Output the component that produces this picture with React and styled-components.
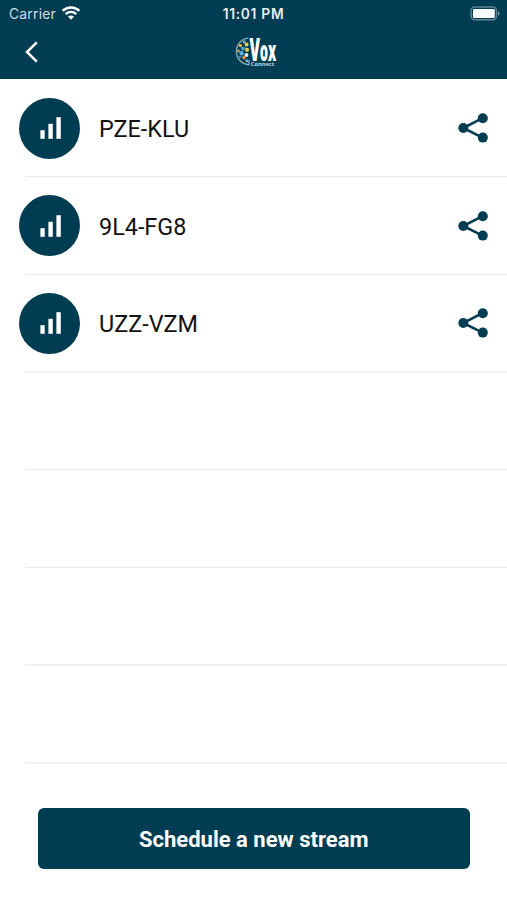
import React from 'react';
import styled, { createGlobalStyle } from 'styled-components';

const streams = ['PZE-KLU', '9L4-FG8', 'UZZ-VZM'];
const emptyRows = [0, 1, 2, 3];

const App = () => {
    return (
        <Screen>
            <GlobalStyle />
            <Header>
                <StatusBar>
                    <Carrier>
                        <CarrierName>Carrier</CarrierName>
                        <WifiIcon />
                    </Carrier>
                    <Time>11:01 PM</Time>
                    <Battery>
                        <BatteryIcon />
                    </Battery>
                </StatusBar>
                <NavBar>
                    <BackButton aria-label="Back">
                        <BackIcon />
                    </BackButton>
                    <Logo />
                </NavBar>
            </Header>
            <List>
                {streams.map((name) => (
                    <Row key={name}>
                        <Avatar>
                            <BarsIcon />
                        </Avatar>
                        <Name>{name}</Name>
                        <ShareButton aria-label="Share">
                            <ShareIcon />
                        </ShareButton>
                    </Row>
                ))}
                {emptyRows.map((row) => <Row key={row} />)}
            </List>
            <Footer>
                <ScheduleButton>Schedule a new stream</ScheduleButton>
            </Footer>
        </Screen>
    )
}

export default App

const WifiIcon = () => (
    <svg width="20" height="15" viewBox="0 0 20 15" fill="none" stroke="#fff">
        <path d="M1.7 4.9C6.5 0.4 13.5 0.4 18.3 4.9" strokeWidth="2.6" />
        <path d="M4.7 8.2C7.9 5.3 12.1 5.3 15.3 8.2" strokeWidth="2.4" />
        <path d="M6.9 10.6C8.8 9 11.2 9 13.1 10.6L10 13.7Z" fill="#fff" stroke="none" />
    </svg>
)

const BatteryIcon = () => (
    <svg width="32" height="16" viewBox="0 0 32 16">
        <rect x="1.1" y="1.1" width="25.4" height="12.6" rx="3.6" fill="none" stroke="#5f8495" strokeWidth="1.5" />
        <rect x="3" y="3" width="21.8" height="9" rx="1.2" fill="#fff" />
        <path d="M28 5.2C30.2 6 30.2 8.8 28 9.6Z" fill="#7896a4" />
    </svg>
)

const BackIcon = () => (
    <svg width="14" height="22" viewBox="0 0 14 22" fill="none" stroke="#fff" strokeWidth="2.5">
        <path d="M12.8 1.3L3 11L12.8 20.7" />
    </svg>
)

const BarsIcon = () => (
    <svg width="22" height="22" viewBox="0 0 22 22" fill="#fff">
        <rect x="0.4" y="13.2" width="4.3" height="8.6" />
        <rect x="8.4" y="6.8" width="4.4" height="15" />
        <rect x="16.4" y="0.2" width="4.4" height="21.6" />
    </svg>
)

const ShareIcon = () => (
    <svg width="32" height="32" viewBox="0 0 32 32" fill="#003c52">
        <path d="M25.5 6.2L6.2 16L25.5 25.6" fill="none" stroke="#003c52" strokeWidth="2.6" />
        <circle cx="6.3" cy="16" r="5" />
        <circle cx="25.8" cy="6.3" r="5" />
        <circle cx="25.8" cy="25.6" r="5" />
    </svg>
)

const Logo = () => (
    <LogoSvg width="40" height="32" viewBox="0 0 40 32">
        <path d="M13.2 2.2C6 2.8 1.4 8.8 1.4 15.6C1.4 22.6 6.2 28 14 28.8V24" fill="none" stroke="#8fadb9" strokeWidth="1.3" />
        <path d="M4 8.5L8.6 13.5L5.5 18.5L9.5 24M8.6 13.5L12 9M5.5 18.5L12.5 19.5" fill="none" stroke="#4f7c90" strokeWidth="0.9" />
        <circle cx="9.2" cy="5.8" r="1.6" fill="#8ba7ae" />
        <circle cx="5.3" cy="9.6" r="1.7" fill="#e0b94f" />
        <circle cx="11.6" cy="8.6" r="2" fill="#efc455" />
        <circle cx="7.9" cy="12.6" r="1.8" fill="#4ba3d6" />
        <circle cx="12" cy="13.8" r="2.1" fill="#f2c84b" />
        <circle cx="3.5" cy="15" r="1.4" fill="#d2a24c" />
        <circle cx="6.5" cy="17.2" r="2.1" fill="#5db4e6" />
        <circle cx="11.5" cy="19" r="1.9" fill="#e9f1f3" />
        <circle cx="4.8" cy="21" r="1.3" fill="#3f8fc2" />
        <circle cx="9" cy="21.6" r="1.8" fill="#df8d3c" />
        <circle cx="12" cy="24.8" r="1.5" fill="#8fb3c0" />
        <g transform="translate(14.6 24.6) scale(0.47 1)">
            <LogoText>V<tspan fontSize="28">ox</tspan></LogoText>
        </g>
        <LogoCaption x="15.8" y="30.2" textLength="23.4" lengthAdjust="spacingAndGlyphs">Connect</LogoCaption>
    </LogoSvg>
)

const GlobalStyle = createGlobalStyle`
    body {
        margin: 0;
        background: #fff;
    }
    * {
        box-sizing: border-box;
    }
`

const Screen = styled.div`
    display: flex;
    flex-direction: column;
    width: 507px;
    height: 900px;
    overflow: hidden;
    background: #fff;
    font-family: Roboto, sans-serif;
`

const Header = styled.header`
    height: 79px;
    flex: none;
    background: #003c52;
    color: #fff;
`

const StatusBar = styled.div`
    display: grid;
    grid-template-columns: 1fr auto 1fr;
    align-items: center;
    height: 27px;
    font-family: Inter, sans-serif;
`

const Carrier = styled.div`
    display: flex;
    align-items: center;
    gap: 5px;
    padding-left: 9px;
`

const CarrierName = styled.span`
    font-size: 13.8px;
    letter-spacing: 0.25px;
    color: #d3dee3;
`

const Time = styled.span`
    font-size: 13.8px;
    font-weight: 600;
    letter-spacing: 0.7px;
    color: #e6edf0;
`

const Battery = styled.div`
    display: flex;
    justify-content: flex-end;
    padding-right: 5px;
`

const NavBar = styled.nav`
    display: grid;
    grid-template-columns: 1fr auto 1fr;
    align-items: center;
    height: 50px;
    padding-left: 2px;
`

const BackButton = styled.button`
    display: flex;
    justify-self: start;
    margin-left: 22px;
    padding: 0;
    border: none;
    background: none;
    cursor: pointer;
`

const LogoSvg = styled.svg`
    overflow: visible;
`

const LogoText = styled.text`
    font-family: 'Open Sans', sans-serif;
    font-size: 32px;
    font-weight: 800;
    letter-spacing: -0.5px;
    fill: #fff;
`

const LogoCaption = styled.text`
    font-family: 'Open Sans', sans-serif;
    font-size: 6px;
    font-weight: 700;
    fill: #c4d6dd;
`

const List = styled.ul`
    flex: none;
    margin: 0;
    padding: 0.7px 0 0;
    list-style: none;
`

const Row = styled.li`
    display: flex;
    align-items: center;
    height: 97.7px;
    padding: 0 18px 1px 19px;
    background: linear-gradient(#ececec, #ececec) 25px 100% / 100% 1.5px no-repeat;
`

const Avatar = styled.div`
    display: flex;
    align-items: center;
    justify-content: center;
    width: 61px;
    height: 61px;
    padding-left: 2px;
    border-radius: 50%;
    background: #003c52;
`

const Name = styled.span`
    margin-left: 19px;
    padding-top: 2px;
    font-size: 23.4px;
    color: #111;
`

const ShareButton = styled.button`
    display: flex;
    margin-left: auto;
    padding: 0;
    border: none;
    background: none;
    cursor: pointer;
`

const Footer = styled.footer`
    padding: 44.2px 37px 0 37.5px;
`

const ScheduleButton = styled.button`
    width: 432.5px;
    height: 61px;
    padding: 3px 0 0;
    border: none;
    border-radius: 6px;
    background: #003c52;
    color: #fff;
    font-family: Roboto, sans-serif;
    font-size: 22px;
    font-weight: 700;
    cursor: pointer;
`
